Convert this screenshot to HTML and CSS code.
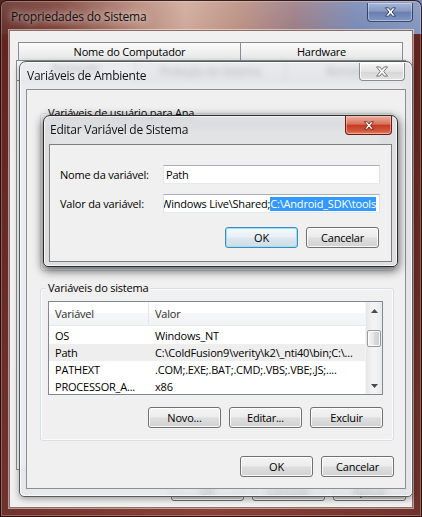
FILE: index.html
```html
<!DOCTYPE html>
<html lang="pt-BR">
<head>
<meta charset="utf-8">
<title>Propriedades do Sistema</title>
<link rel="stylesheet" href="styles.css">
</head>
<body>
<div class="screen">

  <div class="win sys">
    <div class="titlebar sys-titlebar">
      <span class="title sys-title">Propriedades do Sistema</span>
      <div class="close close-blue">
        <svg class="xicon" width="13" height="10" viewBox="0 0 12 10"><path d="M1 0.8H4L6 3.3L8 0.8H11L7.6 5L11 9.2H8L6 6.7L4 9.2H1L4.4 5Z" fill="#fff" stroke="#2b3550" stroke-width="0.9" stroke-linejoin="round"/></svg>
      </div>
    </div>
    <div class="client sys-client">
      <div class="tab-row row1">
        <div class="tab tab-comp">Nome do Computador</div>
        <div class="tab tab-hw">Hardware</div>
      </div>
      <div class="tab-row row2">
        <div class="tab tab-adv">Avançado</div>
        <div class="tab tab-prot">Proteção do Sistema</div>
        <div class="tab tab-rem">Remoto</div>
      </div>
      <div class="tab-panel"></div>
      <div class="btn-row sys-btns">
        <button class="btn">OK</button>
        <button class="btn">Cancelar</button>
        <button class="btn">Aplicar</button>
      </div>
    </div>
  </div>

  <div class="win dlg env">
    <div class="titlebar env-titlebar">
      <span class="title">Variáveis de Ambiente</span>
      <div class="close close-inactive">
        <svg class="xicon" width="14" height="11" viewBox="0 0 12 10"><path d="M1 0.8H4L6 3.3L8 0.8H11L7.6 5L11 9.2H8L6 6.7L4 9.2H1L4.4 5Z" fill="#f6f6f6" stroke="#6b6b6b" stroke-width="0.8" stroke-linejoin="round"/></svg>
      </div>
    </div>
    <div class="client env-client">
      <div class="group user-group">
        <span class="group-label">Variáveis de usuário para Ana</span>
        <div class="listview user-list"></div>
      </div>

      <div class="group sys-group">
        <span class="group-label">Variáveis do sistema</span>
        <div class="listview">
          <div class="lv-main">
            <div class="lv-header"><span class="c1">Variável</span><span class="c2">Valor</span></div>
            <div class="lv-row"><span class="c1">OS</span><span class="c2">Windows_NT</span></div>
            <div class="lv-row selected"><span class="c1">Path</span><span class="c2">C:\ColdFusion9\verity\k2\_nti40\bin;C:\...</span></div>
            <div class="lv-row"><span class="c1">PATHEXT</span><span class="c2">.COM;.EXE;.BAT;.CMD;.VBS;.VBE;.JS;....</span></div>
            <div class="lv-row"><span class="c1">PROCESSOR_A...</span><span class="c2">x86</span></div>
          </div>
          <div class="scrollbar">
            <div class="sb-arrow"><svg width="7" height="4" viewBox="0 0 7 4"><path d="M0 4L3.5 0L7 4Z" fill="#4a4a4a"/></svg></div>
            <div class="sb-track"><div class="sb-thumb"></div></div>
            <div class="sb-arrow"><svg width="7" height="4" viewBox="0 0 7 4"><path d="M0 0L3.5 4L7 0Z" fill="#4a4a4a"/></svg></div>
          </div>
        </div>
        <div class="btn-row group-btns">
          <button class="btn">Novo...</button>
          <button class="btn">Editar...</button>
          <button class="btn">Excluir</button>
        </div>
      </div>

      <div class="btn-row dlg-btns">
        <button class="btn">OK</button>
        <button class="btn">Cancelar</button>
      </div>
    </div>
  </div>

  <div class="win dlg edit">
    <div class="titlebar edit-titlebar">
      <span class="title">Editar Variável de Sistema</span>
      <div class="close close-red">
        <svg class="xicon" width="12" height="9" viewBox="0 0 12 10"><path d="M1 0.8H4L6 3.3L8 0.8H11L7.6 5L11 9.2H8L6 6.7L4 9.2H1L4.4 5Z" fill="#fff" stroke="#5a1a10" stroke-width="0.9" stroke-linejoin="round"/></svg>
      </div>
    </div>
    <div class="client edit-client">
      <div class="form">
        <label class="form-label">Nome da variável:</label>
        <div class="textbox"><span class="tb-text">Path</span></div>
        <label class="form-label">Valor da variável:</label>
        <div class="textbox value-box"><span class="tb-text">Windows Live\Shared;<span class="sel">C:\Android_SDK\tools</span></span></div>
      </div>
      <div class="btn-row edit-btns">
        <button class="btn btn-default">OK</button>
        <button class="btn">Cancelar</button>
      </div>
    </div>
  </div>

</div>
</body>
</html>
```

FILE: styles.css
```css
* { box-sizing: border-box; }

html, body {
  margin: 0;
  padding: 0;
  background: #6d2a22;
}

body {
  font-family: "Open Sans", "Noto Sans", sans-serif;
  font-size: 11px;
  letter-spacing: -0.2px;
  color: #000;
}

.screen {
  position: relative;
  width: 422px;
  height: 517px;
  overflow: hidden;
  background:
    linear-gradient(90deg, #5a241e 0%, #74352c 14%, #b08070 32%, #cba494 44%, #b88a7c 56%, #95747e 70%, #6f82b0 84%, #7c8fbb 100%) top left / 100% 34px no-repeat,
    linear-gradient(90deg, #5a1c16 0%, #7a2e24 50%, #5a1c16 100%);
}

/* ---------- generic window pieces ---------- */

.win {
  display: flex;
  flex-direction: column;
}

.titlebar {
  display: flex;
  justify-content: space-between;
  align-items: flex-start;
  flex: none;
}

.title {
  line-height: 16px;
  white-space: nowrap;
  color: #111;
  font-size: 12px;
  letter-spacing: -0.25px;
}

.close {
  display: flex;
  align-items: center;
  justify-content: center;
  border-radius: 0 0 4px 4px;
}

.client {
  background: #f0f0f0;
}

.btn-row {
  display: flex;
  justify-content: flex-end;
  gap: 8px;
}

.btn {
  width: 73px;
  height: 21px;
  padding: 0;
  font: inherit;
  letter-spacing: inherit;
  color: #000;
  border: 1px solid #707070;
  border-radius: 3px;
  background: linear-gradient(#f4f4f4 0%, #ececec 48%, #dedede 52%, #d2d2d2 100%);
  box-shadow: inset 0 0 0 1px rgba(255, 255, 255, 0.85);
  line-height: 18px;
}

.btn-default {
  border-color: #3c8cc0;
  background: linear-gradient(#f3f8fb 0%, #e9f1f6 48%, #dbe6ee 52%, #d0dde6 100%);
  box-shadow: inset 0 0 0 1px #9fe0f7;
}

/* ---------- outer window: Propriedades do Sistema ---------- */

.sys {
  width: 422px;
  height: 517px;
  border: 1px solid rgba(35, 8, 5, 0.85);
  border-radius: 7px 7px 0 0;
  background: linear-gradient(rgba(255, 255, 255, 0.16), rgba(255, 255, 255, 0.04) 40px, rgba(255, 220, 210, 0.12));
  box-shadow: inset 0 0 0 1px rgba(255, 255, 255, 0.25);
  padding: 0 8px 8px 8px;
}

.sys-titlebar {
  height: 29px;
}

.sys-title {
  margin: 8px 0 0 2px;
  font-size: 12px;
  letter-spacing: -0.2px;
  text-shadow: 0 0 6px rgba(255, 240, 235, 0.9), 0 0 12px rgba(255, 240, 235, 0.7);
}

.close-blue {
  width: 46px;
  height: 19px;
  margin-top: 2px;
  border: 1px solid rgba(30, 40, 70, 0.75);
  border-top: none;
  background: linear-gradient(#a8b7d8 0%, #8598c3 45%, #6a7fb1 52%, #7f96c6 100%);
  box-shadow: inset 0 0 0 1px rgba(255, 255, 255, 0.35);
}

.sys-client {
  flex: 1;
  display: flex;
  flex-direction: column;
  border: 1px solid #8a6e68;
  box-shadow: 0 0 0 1px rgba(255, 235, 228, 0.55);
  padding: 11px 6px 6px 6px;
}

.tab-row {
  display: flex;
  flex: none;
}

.row1 {
  height: 18px;
  margin: 0 3px 0 2px;
}

.row2 {
  height: 20px;
}

.tab {
  display: flex;
  align-items: center;
  justify-content: center;
  border: 1px solid #898c95;
  border-bottom: none;
  background: linear-gradient(#fbfbfb, #e6e6e6);
  white-space: nowrap;
  line-height: 14px;
}

.tab-comp { width: 223px; }
.tab-hw { flex: 1; border-left: none; }

.tab-adv { width: 120px; background: #fcfcfc; align-items: flex-start; }
.tab-prot { width: 150px; border-left: none; }
.tab-rem { flex: 1; border-left: none; }

.tab-panel {
  flex: 1;
  border: 1px solid #898c95;
  background: #fcfcfc;
}

.sys-btns {
  margin-top: 10px;
}

/* ---------- dialogs (windows placed on the desktop) ---------- */

.dlg {
  position: absolute;
  border-radius: 7px 7px 5px 5px;
}

.env {
  left: 19px;
  top: 61px;
  width: 394px;
  height: 436px;
  border: 1px solid #5a5a5a;
  background: rgba(228, 230, 233, 0.74);
  -webkit-backdrop-filter: blur(3px);
  backdrop-filter: blur(3px);
  box-shadow: inset 0 0 0 1px rgba(255, 255, 255, 0.7), 0 2px 6px rgba(0, 0, 0, 0.35);
  padding: 0 6px 7px 6px;
}

.env-titlebar {
  height: 27px;
  padding-left: 1px;
  padding-right: 1px;
}

.env-titlebar .title {
  margin-top: 6px;
}

.close-inactive {
  width: 46px;
  height: 18px;
  margin-top: 1px;
  border: 1px solid #8c8c8c;
  border-top: none;
  background: linear-gradient(#f6f6f6, #e2e2e2 50%, #d6d6d6 52%, #e4e4e4);
  box-shadow: inset 0 0 0 1px rgba(255, 255, 255, 0.8);
}

.env-client {
  flex: 1;
  border: 1px solid #8e8e8e;
  padding: 23px 11px 11px 13px;
  display: flex;
  flex-direction: column;
}

.group {
  display: flex;
  flex-direction: column;
  border: 1px solid #d5dfe5;
  border-radius: 3px;
  box-shadow: inset 0 0 0 1px rgba(255, 255, 255, 0.7);
  padding: 0 10px 12px 7px;
}

.group-label {
  align-self: flex-start;
  margin: -9px 0 5px -2px;
  padding: 0 2px;
  line-height: 16px;
  background: #f0f0f0;
  white-space: nowrap;
}

.user-group {
  height: 158px;
  flex: none;
}

.user-list {
  flex: 1;
}

.sys-group {
  margin-top: 17px;
  flex: none;
}

.listview {
  display: flex;
  height: 94px;
  border: 1px solid #828790;
  background: #fff;
  overflow: hidden;
}

.lv-main {
  flex: 1;
  min-width: 0;
  display: flex;
  flex-direction: column;
}

.lv-header {
  display: flex;
  height: 24px;
  flex: none;
  align-items: center;
  background: linear-gradient(#ffffff 0%, #ffffff 45%, #f6f7f8 50%, #f2f3f5 100%);
  border-bottom: 1px solid #e5e8ec;
  color: #2c2c2c;
  margin-bottom: 1px;
}

.lv-header .c1 {
  border-right: 1px solid #e3e8ee;
  align-self: stretch;
  display: flex;
  align-items: center;
}

.lv-row {
  display: flex;
  height: 17px;
  flex: none;
  align-items: center;
  white-space: nowrap;
}

.lv-row.selected {
  background: #eeeeee;
}

.c1 {
  width: 100px;
  padding-left: 6px;
  flex: none;
  overflow: hidden;
}

.c2 {
  padding-left: 6px;
  white-space: nowrap;
  overflow: hidden;
}

.scrollbar {
  width: 17px;
  flex: none;
  display: flex;
  flex-direction: column;
  background: linear-gradient(90deg, #e6e6e6, #f3f3f3 40%, #f3f3f3 60%, #e9e9e9);
  border-left: 1px solid #f4f4f4;
}

.sb-arrow {
  height: 17px;
  flex: none;
  display: flex;
  align-items: center;
  justify-content: center;
}

.sb-track {
  flex: 1;
  padding: 11px 1px 0 1px;
}

.sb-thumb {
  height: 17px;
  border: 1px solid #9a9a9a;
  border-radius: 2px;
  background: linear-gradient(90deg, #f5f5f5, #e6e6e6 50%, #d9d9d9 51%, #d0d0d0);
  box-shadow: inset 0 0 0 1px rgba(255, 255, 255, 0.8);
}

.group-btns {
  margin-top: 12px;
}

.dlg-btns {
  margin-top: 15px;
}

/* ---------- Editar Variável de Sistema ---------- */

.edit {
  left: 43px;
  top: 115px;
  width: 355px;
  height: 152px;
  border: 1px solid #2c2c2c;
  background: rgba(214, 216, 219, 0.72);
  -webkit-backdrop-filter: blur(3px);
  backdrop-filter: blur(3px);
  box-shadow: inset 0 0 0 1px rgba(255, 255, 255, 0.65), 0 3px 10px 1px rgba(0, 0, 0, 0.6);
  padding: 0 5px 4px 5px;
}

.edit-titlebar {
  height: 28px;
  padding-left: 1px;
}

.edit-titlebar .title {
  margin-top: 6px;
}

.close-red {
  width: 47px;
  height: 19px;
  border: 1px solid #6b1d12;
  border-top: none;
  background: linear-gradient(#eab3a5 0%, #d9705a 45%, #c53a22 52%, #d45a3f 85%, #e08a70 100%);
  box-shadow: inset 0 0 0 1px rgba(255, 210, 200, 0.5);
}

.edit-client {
  flex: 1;
  border: 1px solid #7e7e7e;
  padding: 20px 11px 13px 10px;
  display: flex;
  flex-direction: column;
}

.form {
  display: grid;
  grid-template-columns: 103px 217px;
  row-gap: 10px;
  align-items: center;
}

.form-label {
  white-space: nowrap;
}

.textbox {
  height: 19px;
  border: 1px solid #abadb3;
  border-left-color: #e2e3ea;
  border-right-color: #dbdfe6;
  border-bottom-color: #e3e9ef;
  background: #fff;
  display: flex;
  align-items: center;
  padding: 0 3px 0 2px;
  overflow: hidden;
}

.tb-text {
  white-space: nowrap;
  flex: none;
}

.value-box {
  justify-content: flex-end;
}

.sel {
  background: #3399ff;
  color: #fff;
  display: inline-block;
  line-height: 14px;
}

.edit-btns {
  margin-top: 14px;
  margin-right: 1px;
}
```
